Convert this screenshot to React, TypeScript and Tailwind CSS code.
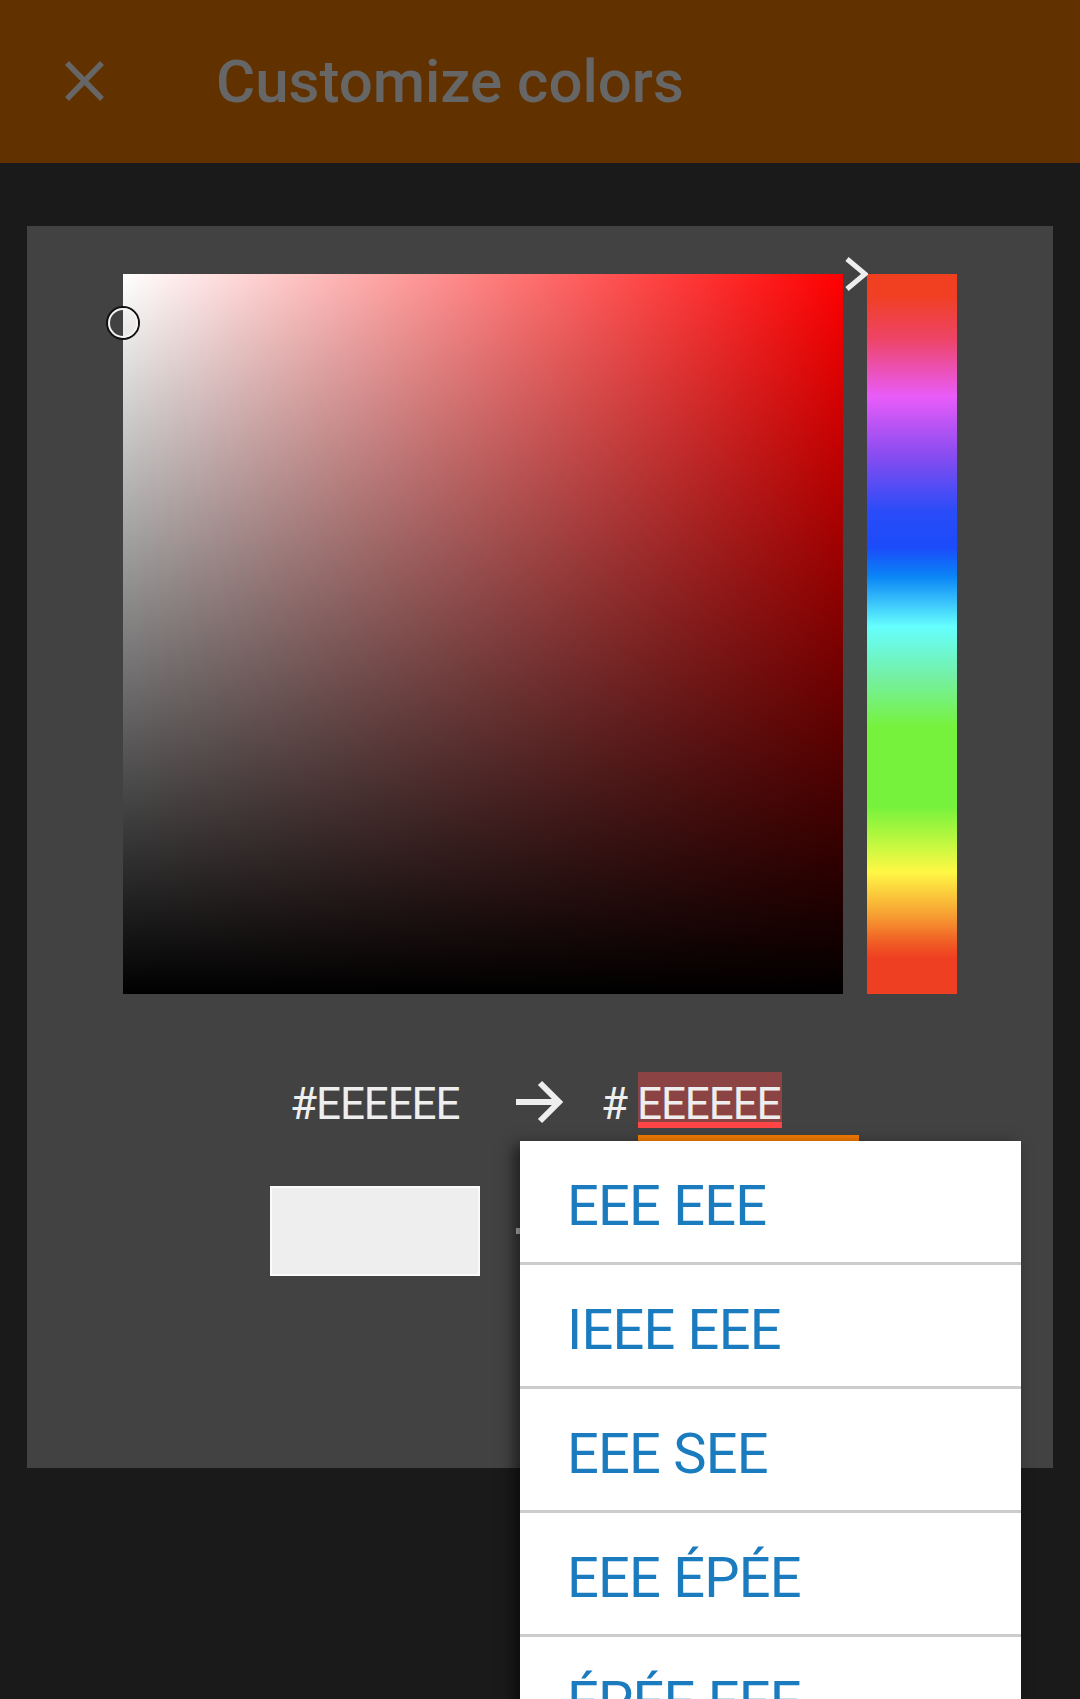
import React from "react";

const items = ["EEE EEE", "IEEE EEE", "EEE SEE", "EEE ÉPÉE", "ÉPÉE EEE"];

export default function App() {
  return (
    <div
      className="relative h-[1699px] w-[1080px] overflow-hidden bg-[#1a1a1a]"
      style={{ fontFamily: "Roboto, 'Noto Sans', sans-serif" }}
    >
      {/* Header */}
      <div className="flex h-[163px] items-center bg-[#613200]">
        <svg className="ml-[62px] h-[46px] w-[46px]" viewBox="0 0 46 46">
          <path d="M5 4 L40 40 M40 4 L5 40" stroke="#666666" strokeWidth="5.5" fill="none" />
        </svg>
        <div className="ml-[108px] text-[60px] font-medium leading-[60px] text-[#666666]">
          Customize colors
        </div>
      </div>

      {/* Panel */}
      <div className="mx-[27px] mt-[63px] h-[1242px] bg-[#424242] pl-[96px] pt-[48px]">
        <div className="flex">
          <div className="relative h-[720px] w-[720px] bg-[linear-gradient(to_bottom,rgba(0,0,0,0),#000),linear-gradient(to_right,#ffffff,#ff0000)]">
            <div className="absolute left-[-17px] top-[32px] h-[34px] w-[34px] rounded-full border-2 border-[#111]">
              <div className="h-full w-full rounded-full border-[2.5px] border-[#f4f4f4]" />
            </div>
          </div>
          <div className="relative w-[24px]">
            <svg className="absolute left-[1px] top-[-19px] h-[38px] w-[24px]" viewBox="0 0 24 38">
              <path d="M3 4 L21 19 L3 34" stroke="#eeeeee" strokeWidth="5" fill="none" />
            </svg>
          </div>
          <div className="h-[720px] w-[90px] bg-[linear-gradient(to_bottom,#f03f20_0%,#f03f22_3%,#ee4466_9%,#e95cf9_17%,#8a4cf0_25%,#2a4cf8_33%,#1b4bfa_38%,#0a84f6_42%,#66ffff_49%,#74f0a4_56%,#77f23c_63%,#77f23c_74%,#c0f840_79%,#fff845_83%,#f7a032_89%,#f05a24_93%,#ef3f22_95%,#ef3f22_100%)]" />
        </div>

        {/* Hex row */}
        <div className="-ml-[96px] mt-[78px] flex items-start text-[44px] leading-[44px] tracking-[-1.1px] text-[#eeeeee]">
          <div className="ml-[263px] h-[56px] w-[175px] pt-[10px]">#EEEEEE</div>
          <svg className="ml-[51px] mt-[6px] h-[48px] w-[48px]" viewBox="0 0 48 48">
            <path d="M0 24 H42 M24 5 L43 24 L24 43" stroke="#eeeeee" strokeWidth="6" fill="none" />
          </svg>
          <div className="ml-[37px] h-[56px] w-[26px] pt-[10px]">#</div>
          <div className="ml-[11px] flex flex-col">
            <div className="flex h-[56px] w-[144px] flex-col bg-[#8b4343]">
              <div className="h-[50px] pt-[10px] -ml-[1px]">EEEEEE</div>
              <div className="h-[6px] bg-[#ff4545]" />
            </div>
            <div className="mt-[7px] h-[6px] w-[221px] bg-[#f57c00]" />
          </div>
        </div>

        {/* Swatch row */}
        <div className="-ml-[96px] mt-[45px] flex items-start">
          <div className="ml-[243px] h-[90px] w-[210px] border-2 border-[#fafafa] bg-[#eeeeee]" />
          <div className="ml-[36px] mt-[42px] h-[6px] w-[4px] bg-[#cccccc]" />
        </div>
      </div>

      {/* Dropdown */}
      <div className="absolute left-[520px] top-[1141px] w-[501px] bg-white shadow-[-6px_4px_14px_rgba(0,0,0,0.55)]">
        {items.map((t) => (
          <div
            key={t}
            className="h-[124px] border-b-[3px] border-[#cccccc] pl-[47px] pt-[37px] text-[56px] leading-[56px] tracking-[-0.8px] text-[#1b7bbf]"
          >
            {t}
          </div>
        ))}
      </div>
    </div>
  );
}
